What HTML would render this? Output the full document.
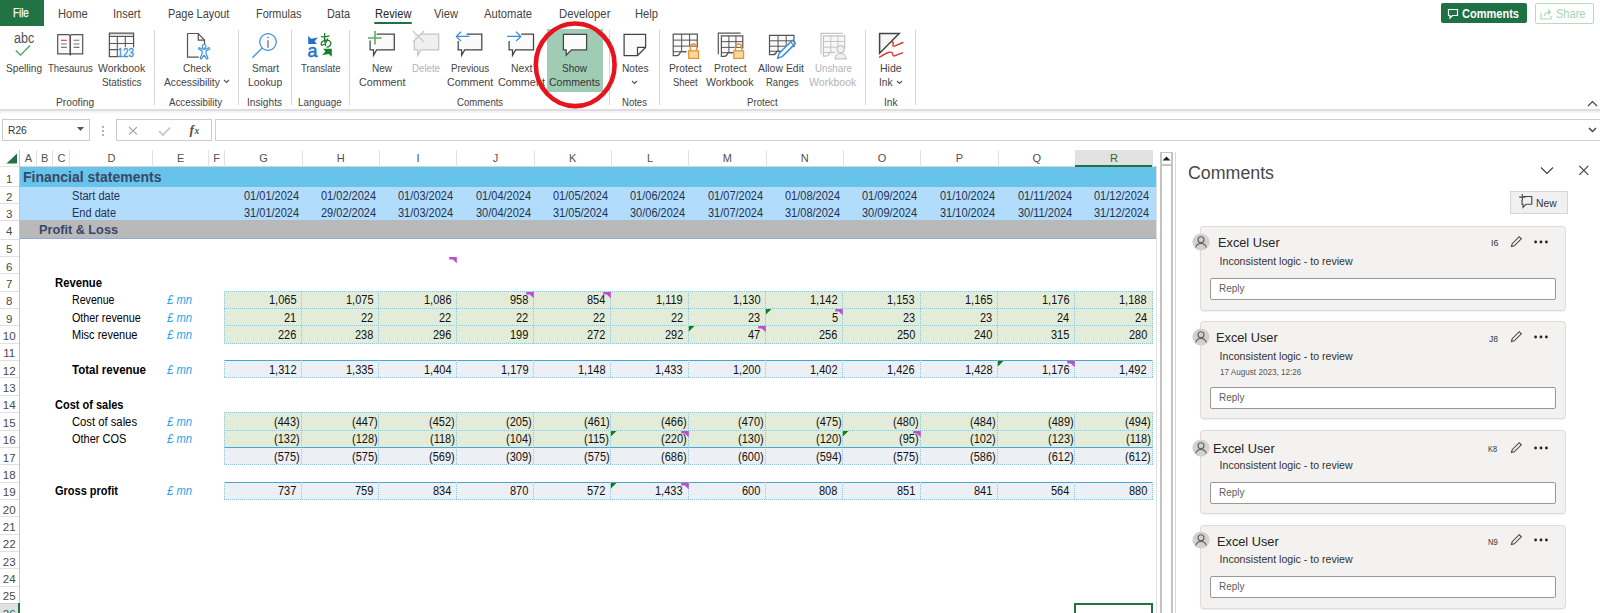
<!DOCTYPE html>
<html><head><meta charset="utf-8"><title>Excel Review</title>
<style>
html,body{margin:0;padding:0;background:#fff;}
body{width:1600px;height:613px;overflow:hidden;position:relative;font-family:"Liberation Sans",sans-serif;}
.a{position:absolute;}
.t{position:absolute;white-space:nowrap;}
svg.a{overflow:visible;}
</style></head><body>
<div class="a" style="left:0px;top:0px;width:44px;height:26px;background:#217346;"></div>
<div class="t" style="left:12.60px;top:5.77px;font-size:12.5px;line-height:15px;color:#fff;transform:scaleX(0.7844);transform-origin:0 0;-webkit-text-stroke:0.25px #fff;">File</div>
<div class="t" style="left:57.60px;top:6.84px;font-size:12px;line-height:14px;color:#444;transform:scaleX(0.9310);transform-origin:0 0;">Home</div>
<div class="t" style="left:113.00px;top:6.84px;font-size:12px;line-height:14px;color:#444;transform:scaleX(0.9196);transform-origin:0 0;">Insert</div>
<div class="t" style="left:167.60px;top:6.84px;font-size:12px;line-height:14px;color:#444;transform:scaleX(0.9111);transform-origin:0 0;">Page Layout</div>
<div class="t" style="left:255.60px;top:6.84px;font-size:12px;line-height:14px;color:#444;transform:scaleX(0.9078);transform-origin:0 0;">Formulas</div>
<div class="t" style="left:327.00px;top:6.84px;font-size:12px;line-height:14px;color:#444;transform:scaleX(0.9074);transform-origin:0 0;">Data</div>
<div class="t" style="left:374.60px;top:6.84px;font-size:12px;line-height:14px;color:#262626;transform:scaleX(0.9251);transform-origin:0 0;">Review</div>
<div class="t" style="left:434.00px;top:6.84px;font-size:12px;line-height:14px;color:#444;transform:scaleX(0.9305);transform-origin:0 0;">View</div>
<div class="t" style="left:484.00px;top:6.84px;font-size:12px;line-height:14px;color:#444;transform:scaleX(0.9345);transform-origin:0 0;">Automate</div>
<div class="t" style="left:558.60px;top:6.84px;font-size:12px;line-height:14px;color:#444;transform:scaleX(0.9397);transform-origin:0 0;">Developer</div>
<div class="t" style="left:635.00px;top:6.84px;font-size:12px;line-height:14px;color:#444;transform:scaleX(0.9319);transform-origin:0 0;">Help</div>
<div class="a" style="left:374px;top:22px;width:38px;height:2px;background:#1e7145;border-radius:1px;"></div>
<div class="a" style="left:1441px;top:3px;width:86px;height:20px;background:#1e7145;border-radius:2px;"></div>
<svg class="a" style="left:1447px;top:8px;" width="12" height="11" viewBox="0 0 12 11"><path d="M1.5 1.5h9v6h-5l-2.5 2.5v-2.5h-1.5z" fill="none" stroke="#fff" stroke-width="1.2"/></svg>
<div class="t" style="left:1462.00px;top:6.84px;font-size:12px;line-height:14px;color:#fff;font-weight:bold;transform:scaleX(0.9192);transform-origin:0 0;">Comments</div>
<div class="a" style="left:1535px;top:3px;width:59px;height:21px;border:1px solid #b5dcc3;border-radius:2px;box-sizing:border-box;"></div>
<svg class="a" style="left:1540px;top:8px;" width="13" height="12" viewBox="0 0 13 12"><path d="M1 5v6h10V8" fill="none" stroke="#a8d3b6" stroke-width="1.1"/><path d="M4 8c1-3 3-4 6-4M8 1.5l2.5 2.5L8 6.5" fill="none" stroke="#a8d3b6" stroke-width="1.1"/></svg>
<div class="t" style="left:1555.50px;top:6.84px;font-size:12px;line-height:14px;color:#a8d3b6;transform:scaleX(0.9212);transform-origin:0 0;">Share</div>
<div class="t" style="left:6.20px;top:61.69px;font-size:11px;line-height:13px;color:#444;transform:scaleX(0.9223);transform-origin:0 0;">Spelling</div>
<div class="t" style="left:47.80px;top:61.69px;font-size:11px;line-height:13px;color:#444;transform:scaleX(0.8620);transform-origin:0 0;">Thesaurus</div>
<div class="t" style="left:97.80px;top:61.69px;font-size:11px;line-height:13px;color:#444;transform:scaleX(0.9571);transform-origin:0 0;">Workbook</div>
<div class="t" style="left:102.00px;top:75.69px;font-size:11px;line-height:13px;color:#444;transform:scaleX(0.8975);transform-origin:0 0;">Statistics</div>
<div class="t" style="left:56.20px;top:95.69px;font-size:11px;line-height:13px;color:#444;transform:scaleX(0.9299);transform-origin:0 0;">Proofing</div>
<div class="t" style="left:182.90px;top:61.69px;font-size:11px;line-height:13px;color:#444;transform:scaleX(0.9012);transform-origin:0 0;">Check</div>
<div class="t" style="left:163.50px;top:75.69px;font-size:11px;line-height:13px;color:#444;transform:scaleX(0.9315);transform-origin:0 0;">Accessibility</div>
<div class="t" style="left:169.40px;top:95.69px;font-size:11px;line-height:13px;color:#444;transform:scaleX(0.8847);transform-origin:0 0;">Accessibility</div>
<div class="t" style="left:252.00px;top:61.69px;font-size:11px;line-height:13px;color:#444;transform:scaleX(0.9203);transform-origin:0 0;">Smart</div>
<div class="t" style="left:247.80px;top:75.69px;font-size:11px;line-height:13px;color:#444;transform:scaleX(0.9477);transform-origin:0 0;">Lookup</div>
<div class="t" style="left:246.70px;top:95.69px;font-size:11px;line-height:13px;color:#444;transform:scaleX(0.9259);transform-origin:0 0;">Insights</div>
<div class="t" style="left:301.20px;top:61.69px;font-size:11px;line-height:13px;color:#444;transform:scaleX(0.8692);transform-origin:0 0;">Translate</div>
<div class="t" style="left:298.40px;top:95.69px;font-size:11px;line-height:13px;color:#444;transform:scaleX(0.8909);transform-origin:0 0;">Language</div>
<div class="t" style="left:372.20px;top:61.69px;font-size:11px;line-height:13px;color:#444;transform:scaleX(0.9134);transform-origin:0 0;">New</div>
<div class="t" style="left:359.00px;top:75.69px;font-size:11px;line-height:13px;color:#444;transform:scaleX(0.9753);transform-origin:0 0;">Comment</div>
<div class="t" style="left:412.40px;top:61.69px;font-size:11px;line-height:13px;color:#b4b4b4;transform:scaleX(0.8806);transform-origin:0 0;">Delete</div>
<div class="t" style="left:451.20px;top:61.69px;font-size:11px;line-height:13px;color:#444;transform:scaleX(0.8926);transform-origin:0 0;">Previous</div>
<div class="t" style="left:446.70px;top:75.69px;font-size:11px;line-height:13px;color:#444;transform:scaleX(0.9690);transform-origin:0 0;">Comment</div>
<div class="t" style="left:510.90px;top:61.69px;font-size:11px;line-height:13px;color:#444;transform:scaleX(0.9506);transform-origin:0 0;">Next</div>
<div class="t" style="left:498.10px;top:75.69px;font-size:11px;line-height:13px;color:#444;transform:scaleX(0.9837);transform-origin:0 0;">Comment</div>
<div class="t" style="left:456.50px;top:95.69px;font-size:11px;line-height:13px;color:#444;transform:scaleX(0.8669);transform-origin:0 0;">Comments</div>
<div class="a" style="left:547px;top:29px;width:56px;height:63px;background:#a0cbb4;"></div>
<div class="t" style="left:562.00px;top:61.69px;font-size:11px;line-height:13px;color:#333;transform:scaleX(0.9049);transform-origin:0 0;">Show</div>
<div class="t" style="left:549.40px;top:75.69px;font-size:11px;line-height:13px;color:#333;transform:scaleX(0.9571);transform-origin:0 0;">Comments</div>
<div class="t" style="left:621.50px;top:61.69px;font-size:11px;line-height:13px;color:#444;transform:scaleX(0.9222);transform-origin:0 0;">Notes</div>
<div class="t" style="left:621.50px;top:95.69px;font-size:11px;line-height:13px;color:#444;transform:scaleX(0.8665);transform-origin:0 0;">Notes</div>
<div class="t" style="left:669.30px;top:61.69px;font-size:11px;line-height:13px;color:#444;transform:scaleX(0.9326);transform-origin:0 0;">Protect</div>
<div class="t" style="left:673.40px;top:75.69px;font-size:11px;line-height:13px;color:#444;transform:scaleX(0.8592);transform-origin:0 0;">Sheet</div>
<div class="t" style="left:714.00px;top:61.69px;font-size:11px;line-height:13px;color:#444;transform:scaleX(0.9384);transform-origin:0 0;">Protect</div>
<div class="t" style="left:706.40px;top:75.69px;font-size:11px;line-height:13px;color:#444;transform:scaleX(0.9631);transform-origin:0 0;">Workbook</div>
<div class="t" style="left:758.30px;top:61.69px;font-size:11px;line-height:13px;color:#444;transform:scaleX(0.9504);transform-origin:0 0;">Allow Edit</div>
<div class="t" style="left:765.50px;top:75.69px;font-size:11px;line-height:13px;color:#444;transform:scaleX(0.8651);transform-origin:0 0;">Ranges</div>
<div class="t" style="left:814.50px;top:61.69px;font-size:11px;line-height:13px;color:#b4b4b4;transform:scaleX(0.8851);transform-origin:0 0;">Unshare</div>
<div class="t" style="left:809.00px;top:75.69px;font-size:11px;line-height:13px;color:#b4b4b4;transform:scaleX(0.9591);transform-origin:0 0;">Workbook</div>
<div class="t" style="left:747.40px;top:95.69px;font-size:11px;line-height:13px;color:#444;transform:scaleX(0.8781);transform-origin:0 0;">Protect</div>
<div class="t" style="left:880.00px;top:61.69px;font-size:11px;line-height:13px;color:#444;transform:scaleX(0.9548);transform-origin:0 0;">Hide</div>
<div class="t" style="left:879.30px;top:75.69px;font-size:11px;line-height:13px;color:#444;transform:scaleX(0.9200);transform-origin:0 0;">Ink</div>
<div class="t" style="left:883.60px;top:95.69px;font-size:11px;line-height:13px;color:#444;transform:scaleX(0.9268);transform-origin:0 0;">Ink</div>
<svg class="a" style="left:222.5px;top:79px;" width="7" height="5" viewBox="0 0 7 5"><path d="M1 1l2.5 2.5L6 1" fill="none" stroke="#555" stroke-width="1.1"/></svg>
<svg class="a" style="left:631px;top:79.5px;" width="7" height="5" viewBox="0 0 7 5"><path d="M1 1l2.5 2.5L6 1" fill="none" stroke="#555" stroke-width="1.1"/></svg>
<svg class="a" style="left:895.5px;top:79.5px;" width="7" height="5" viewBox="0 0 7 5"><path d="M1 1l2.5 2.5L6 1" fill="none" stroke="#555" stroke-width="1.1"/></svg>
<div class="a" style="left:154px;top:30px;width:1px;height:75px;background:#d6d6d6;"></div>
<div class="a" style="left:238px;top:30px;width:1px;height:75px;background:#d6d6d6;"></div>
<div class="a" style="left:291px;top:30px;width:1px;height:75px;background:#d6d6d6;"></div>
<div class="a" style="left:349px;top:30px;width:1px;height:75px;background:#d6d6d6;"></div>
<div class="a" style="left:609px;top:30px;width:1px;height:75px;background:#d6d6d6;"></div>
<div class="a" style="left:659px;top:30px;width:1px;height:75px;background:#d6d6d6;"></div>
<div class="a" style="left:865px;top:30px;width:1px;height:75px;background:#d6d6d6;"></div>
<div class="a" style="left:915px;top:30px;width:1px;height:75px;background:#d6d6d6;"></div>
<div class="a" style="left:0px;top:109px;width:1600px;height:2px;background:#dedede;"></div>
<div class="a" style="left:0px;top:111px;width:1600px;height:3px;background:linear-gradient(#efefef,#fff);"></div>
<svg class="a" style="left:1587px;top:100px;" width="11" height="7" viewBox="0 0 11 7"><path d="M1 6l4.5-4.5L10 6" fill="none" stroke="#444" stroke-width="1.2"/></svg>
<div class="t" style="left:13.70px;top:30.25px;font-size:14px;line-height:17px;color:#505050;transform:scaleX(0.8993);transform-origin:0 0;">abc</div>
<div class="a" style="left:2px;top:119px;width:88px;height:22px;border:1px solid #cbcbcb;box-sizing:border-box;background:#fff;"></div>
<div class="t" style="left:8.20px;top:124.19px;font-size:11px;line-height:13px;color:#333;transform:scaleX(0.9316);transform-origin:0 0;">R26</div>
<svg class="a" style="left:77px;top:127px;" width="8" height="5" viewBox="0 0 8 5"><path d="M0 0h7L3.5 4z" fill="#555"/></svg>
<div class="a" style="left:102px;top:126px;width:2px;height:2px;background:#999;border-radius:50%;"></div>
<div class="a" style="left:102px;top:130px;width:2px;height:2px;background:#999;border-radius:50%;"></div>
<div class="a" style="left:102px;top:134px;width:2px;height:2px;background:#999;border-radius:50%;"></div>
<div class="a" style="left:116px;top:119px;width:96px;height:22px;border:1px solid #cbcbcb;box-sizing:border-box;background:#fff;"></div>
<svg class="a" style="left:128px;top:126px;" width="10" height="9" viewBox="0 0 10 9"><path d="M1 1l8 7.5M9 1L1 8.5" stroke="#a8a8a8" stroke-width="1.1"/></svg>
<svg class="a" style="left:158px;top:126px;" width="13" height="10" viewBox="0 0 13 10"><path d="M1 5l4 4L12 1.5" fill="none" stroke="#c4c4c4" stroke-width="1.6"/></svg>
<div class="a" style="left:215px;top:119px;width:1385px;height:22px;border:1px solid #cfcfcf;border-right:none;box-sizing:border-box;background:#fff;"></div>
<svg class="a" style="left:1588px;top:127px;" width="9" height="6" viewBox="0 0 9 6"><path d="M1 1l3.5 3.5L8 1" fill="none" stroke="#444" stroke-width="1.5"/></svg>
<div class="a" style="left:0px;top:150px;width:1157px;height:17px;background:#fff;"></div>
<div class="a" style="left:20px;top:166px;width:1137px;height:1px;background:#d4d4d4;"></div>
<div class="a" style="left:36px;top:150px;width:1px;height:17px;background:#e1e1e1;"></div>
<div class="t" style="left:24.83px;top:152.39px;font-size:11px;line-height:13px;color:#505050;">A</div>
<div class="a" style="left:52px;top:150px;width:1px;height:17px;background:#e1e1e1;"></div>
<div class="t" style="left:41.08px;top:152.39px;font-size:11px;line-height:13px;color:#505050;">B</div>
<div class="a" style="left:69px;top:150px;width:1px;height:17px;background:#e1e1e1;"></div>
<div class="t" style="left:57.48px;top:152.39px;font-size:11px;line-height:13px;color:#505050;">C</div>
<div class="a" style="left:152px;top:150px;width:1px;height:17px;background:#e1e1e1;"></div>
<div class="t" style="left:107.48px;top:152.39px;font-size:11px;line-height:13px;color:#505050;">D</div>
<div class="a" style="left:208px;top:150px;width:1px;height:17px;background:#e1e1e1;"></div>
<div class="t" style="left:177.08px;top:152.39px;font-size:11px;line-height:13px;color:#505050;">E</div>
<div class="a" style="left:224px;top:150px;width:1px;height:17px;background:#e1e1e1;"></div>
<div class="t" style="left:213.29px;top:152.39px;font-size:11px;line-height:13px;color:#505050;">F</div>
<div class="a" style="left:302px;top:150px;width:1px;height:17px;background:#e1e1e1;"></div>
<div class="t" style="left:259.19px;top:152.39px;font-size:11px;line-height:13px;color:#505050;">G</div>
<div class="a" style="left:379px;top:150px;width:1px;height:17px;background:#e1e1e1;"></div>
<div class="t" style="left:336.82px;top:152.39px;font-size:11px;line-height:13px;color:#505050;">H</div>
<div class="a" style="left:456px;top:150px;width:1px;height:17px;background:#e1e1e1;"></div>
<div class="t" style="left:416.60px;top:152.39px;font-size:11px;line-height:13px;color:#505050;">I</div>
<div class="a" style="left:534px;top:150px;width:1px;height:17px;background:#e1e1e1;"></div>
<div class="t" style="left:492.71px;top:152.39px;font-size:11px;line-height:13px;color:#505050;">J</div>
<div class="a" style="left:611px;top:150px;width:1px;height:17px;background:#e1e1e1;"></div>
<div class="t" style="left:569.12px;top:152.39px;font-size:11px;line-height:13px;color:#505050;">K</div>
<div class="a" style="left:688px;top:150px;width:1px;height:17px;background:#e1e1e1;"></div>
<div class="t" style="left:647.06px;top:152.39px;font-size:11px;line-height:13px;color:#505050;">L</div>
<div class="a" style="left:766px;top:150px;width:1px;height:17px;background:#e1e1e1;"></div>
<div class="t" style="left:722.86px;top:152.39px;font-size:11px;line-height:13px;color:#505050;">M</div>
<div class="a" style="left:843px;top:150px;width:1px;height:17px;background:#e1e1e1;"></div>
<div class="t" style="left:800.80px;top:152.39px;font-size:11px;line-height:13px;color:#505050;">N</div>
<div class="a" style="left:920px;top:150px;width:1px;height:17px;background:#e1e1e1;"></div>
<div class="t" style="left:877.83px;top:152.39px;font-size:11px;line-height:13px;color:#505050;">O</div>
<div class="a" style="left:998px;top:150px;width:1px;height:17px;background:#e1e1e1;"></div>
<div class="t" style="left:955.77px;top:152.39px;font-size:11px;line-height:13px;color:#505050;">P</div>
<div class="a" style="left:1075px;top:150px;width:1px;height:17px;background:#e1e1e1;"></div>
<div class="t" style="left:1032.49px;top:152.39px;font-size:11px;line-height:13px;color:#505050;">Q</div>
<div class="a" style="left:1152px;top:150px;width:1px;height:17px;background:#e1e1e1;"></div>
<div class="a" style="left:1075px;top:150px;width:77px;height:16px;background:#e1e1e1;"></div>
<div class="a" style="left:1075px;top:165px;width:77px;height:2px;background:#217346;"></div>
<div class="t" style="left:1110.12px;top:152.39px;font-size:11px;line-height:13px;color:#1e6a3e;">R</div>
<div class="a" style="left:0px;top:166px;width:20px;height:1px;background:#e6e6e6;"></div>
<svg class="a" style="left:6px;top:153px;" width="12" height="11" viewBox="0 0 12 11"><path d="M11 0.5V10.5H0.5z" fill="#217346"/></svg>
<div class="a" style="left:19px;top:150px;width:1px;height:463px;background:#c4c4c4;"></div>
<div class="a" style="left:0px;top:186px;width:19px;height:1px;background:#e1e1e1;"></div>
<div class="t" style="left:6.00px;top:171.82px;font-size:11.5px;line-height:14px;color:#4a4a4a;">1</div>
<div class="a" style="left:0px;top:203px;width:19px;height:1px;background:#e1e1e1;"></div>
<div class="t" style="left:6.00px;top:190.12px;font-size:11.5px;line-height:14px;color:#4a4a4a;">2</div>
<div class="a" style="left:0px;top:220px;width:19px;height:1px;background:#e1e1e1;"></div>
<div class="t" style="left:6.00px;top:207.02px;font-size:11.5px;line-height:14px;color:#4a4a4a;">3</div>
<div class="a" style="left:0px;top:239px;width:19px;height:1px;background:#e1e1e1;"></div>
<div class="t" style="left:6.00px;top:223.92px;font-size:11.5px;line-height:14px;color:#4a4a4a;">4</div>
<div class="a" style="left:0px;top:256px;width:19px;height:1px;background:#e1e1e1;"></div>
<div class="t" style="left:6.00px;top:242.22px;font-size:11.5px;line-height:14px;color:#4a4a4a;">5</div>
<div class="a" style="left:0px;top:273px;width:19px;height:1px;background:#e1e1e1;"></div>
<div class="t" style="left:6.00px;top:259.58px;font-size:11.5px;line-height:14px;color:#4a4a4a;">6</div>
<div class="a" style="left:0px;top:291px;width:19px;height:1px;background:#e1e1e1;"></div>
<div class="t" style="left:6.00px;top:276.94px;font-size:11.5px;line-height:14px;color:#4a4a4a;">7</div>
<div class="a" style="left:0px;top:308px;width:19px;height:1px;background:#e1e1e1;"></div>
<div class="t" style="left:6.00px;top:294.30px;font-size:11.5px;line-height:14px;color:#4a4a4a;">8</div>
<div class="a" style="left:0px;top:325px;width:19px;height:1px;background:#e1e1e1;"></div>
<div class="t" style="left:6.00px;top:311.66px;font-size:11.5px;line-height:14px;color:#4a4a4a;">9</div>
<div class="a" style="left:0px;top:343px;width:19px;height:1px;background:#e1e1e1;"></div>
<div class="t" style="left:2.80px;top:329.02px;font-size:11.5px;line-height:14px;color:#4a4a4a;">10</div>
<div class="a" style="left:0px;top:360px;width:19px;height:1px;background:#e1e1e1;"></div>
<div class="t" style="left:3.23px;top:346.38px;font-size:11.5px;line-height:14px;color:#4a4a4a;">11</div>
<div class="a" style="left:0px;top:377px;width:19px;height:1px;background:#e1e1e1;"></div>
<div class="t" style="left:2.80px;top:363.74px;font-size:11.5px;line-height:14px;color:#4a4a4a;">12</div>
<div class="a" style="left:0px;top:395px;width:19px;height:1px;background:#e1e1e1;"></div>
<div class="t" style="left:2.80px;top:381.10px;font-size:11.5px;line-height:14px;color:#4a4a4a;">13</div>
<div class="a" style="left:0px;top:412px;width:19px;height:1px;background:#e1e1e1;"></div>
<div class="t" style="left:2.80px;top:398.46px;font-size:11.5px;line-height:14px;color:#4a4a4a;">14</div>
<div class="a" style="left:0px;top:430px;width:19px;height:1px;background:#e1e1e1;"></div>
<div class="t" style="left:2.80px;top:415.82px;font-size:11.5px;line-height:14px;color:#4a4a4a;">15</div>
<div class="a" style="left:0px;top:447px;width:19px;height:1px;background:#e1e1e1;"></div>
<div class="t" style="left:2.80px;top:433.18px;font-size:11.5px;line-height:14px;color:#4a4a4a;">16</div>
<div class="a" style="left:0px;top:464px;width:19px;height:1px;background:#e1e1e1;"></div>
<div class="t" style="left:2.80px;top:450.54px;font-size:11.5px;line-height:14px;color:#4a4a4a;">17</div>
<div class="a" style="left:0px;top:482px;width:19px;height:1px;background:#e1e1e1;"></div>
<div class="t" style="left:2.80px;top:467.90px;font-size:11.5px;line-height:14px;color:#4a4a4a;">18</div>
<div class="a" style="left:0px;top:499px;width:19px;height:1px;background:#e1e1e1;"></div>
<div class="t" style="left:2.80px;top:485.26px;font-size:11.5px;line-height:14px;color:#4a4a4a;">19</div>
<div class="a" style="left:0px;top:516px;width:19px;height:1px;background:#e1e1e1;"></div>
<div class="t" style="left:2.80px;top:502.62px;font-size:11.5px;line-height:14px;color:#4a4a4a;">20</div>
<div class="a" style="left:0px;top:534px;width:19px;height:1px;background:#e1e1e1;"></div>
<div class="t" style="left:2.80px;top:519.98px;font-size:11.5px;line-height:14px;color:#4a4a4a;">21</div>
<div class="a" style="left:0px;top:551px;width:19px;height:1px;background:#e1e1e1;"></div>
<div class="t" style="left:2.80px;top:537.34px;font-size:11.5px;line-height:14px;color:#4a4a4a;">22</div>
<div class="a" style="left:0px;top:568px;width:19px;height:1px;background:#e1e1e1;"></div>
<div class="t" style="left:2.80px;top:554.70px;font-size:11.5px;line-height:14px;color:#4a4a4a;">23</div>
<div class="a" style="left:0px;top:586px;width:19px;height:1px;background:#e1e1e1;"></div>
<div class="t" style="left:2.80px;top:572.06px;font-size:11.5px;line-height:14px;color:#4a4a4a;">24</div>
<div class="a" style="left:0px;top:603px;width:19px;height:1px;background:#e1e1e1;"></div>
<div class="t" style="left:2.80px;top:589.42px;font-size:11.5px;line-height:14px;color:#4a4a4a;">25</div>
<div class="a" style="left:0px;top:621px;width:19px;height:1px;background:#e1e1e1;"></div>
<div class="a" style="left:0px;top:603px;width:19px;height:10px;background:#e1e1e1;"></div>
<div class="a" style="left:18px;top:603px;width:2px;height:10px;background:#217346;"></div>
<div class="a" style="left:0px;top:603px;width:18px;height:1px;background:#cfcfcf;"></div>
<div class="t" style="left:2.80px;top:606.78px;font-size:11.5px;line-height:14px;color:#1e6a3e;">26</div>
<div class="a" style="left:20px;top:167px;width:1137px;height:20px;background:#66c3ea;"></div>
<div class="a" style="left:20px;top:187px;width:1137px;height:33px;background:#b1dcfb;"></div>
<div class="a" style="left:20px;top:220px;width:1137px;height:18px;background:#b9b9b9;"></div>
<div class="a" style="left:20px;top:238px;width:1137px;height:1px;background:#8eaade;"></div>
<div class="t" style="left:23.00px;top:168.65px;font-size:14px;line-height:17px;color:#3a4668;font-weight:bold;">Financial statements</div>
<div class="t" style="left:71.50px;top:188.64px;font-size:12px;line-height:14px;color:#27314f;transform:scaleX(0.9225);transform-origin:0 0;">Start date</div>
<div class="t" style="left:71.50px;top:205.64px;font-size:12px;line-height:14px;color:#27314f;transform:scaleX(0.9167);transform-origin:0 0;">End date</div>
<div class="t" style="left:38.90px;top:222.00px;font-size:13px;line-height:16px;color:#3a4668;font-weight:bold;transform:scaleX(0.9766);transform-origin:0 0;">Profit &amp; Loss</div>
<div class="t" style="left:243.68px;top:188.64px;font-size:12px;line-height:14px;color:#27314f;transform:scaleX(0.9167);transform-origin:0 0;">01/01/2024</div>
<div class="t" style="left:243.68px;top:205.64px;font-size:12px;line-height:14px;color:#27314f;transform:scaleX(0.9167);transform-origin:0 0;">31/01/2024</div>
<div class="t" style="left:321.01px;top:188.64px;font-size:12px;line-height:14px;color:#27314f;transform:scaleX(0.9167);transform-origin:0 0;">01/02/2024</div>
<div class="t" style="left:321.01px;top:205.64px;font-size:12px;line-height:14px;color:#27314f;transform:scaleX(0.9167);transform-origin:0 0;">29/02/2024</div>
<div class="t" style="left:398.34px;top:188.64px;font-size:12px;line-height:14px;color:#27314f;transform:scaleX(0.9167);transform-origin:0 0;">01/03/2024</div>
<div class="t" style="left:398.34px;top:205.64px;font-size:12px;line-height:14px;color:#27314f;transform:scaleX(0.9167);transform-origin:0 0;">31/03/2024</div>
<div class="t" style="left:475.67px;top:188.64px;font-size:12px;line-height:14px;color:#27314f;transform:scaleX(0.9167);transform-origin:0 0;">01/04/2024</div>
<div class="t" style="left:475.67px;top:205.64px;font-size:12px;line-height:14px;color:#27314f;transform:scaleX(0.9167);transform-origin:0 0;">30/04/2024</div>
<div class="t" style="left:553.00px;top:188.64px;font-size:12px;line-height:14px;color:#27314f;transform:scaleX(0.9167);transform-origin:0 0;">01/05/2024</div>
<div class="t" style="left:553.00px;top:205.64px;font-size:12px;line-height:14px;color:#27314f;transform:scaleX(0.9167);transform-origin:0 0;">31/05/2024</div>
<div class="t" style="left:630.33px;top:188.64px;font-size:12px;line-height:14px;color:#27314f;transform:scaleX(0.9167);transform-origin:0 0;">01/06/2024</div>
<div class="t" style="left:630.33px;top:205.64px;font-size:12px;line-height:14px;color:#27314f;transform:scaleX(0.9167);transform-origin:0 0;">30/06/2024</div>
<div class="t" style="left:707.66px;top:188.64px;font-size:12px;line-height:14px;color:#27314f;transform:scaleX(0.9167);transform-origin:0 0;">01/07/2024</div>
<div class="t" style="left:707.66px;top:205.64px;font-size:12px;line-height:14px;color:#27314f;transform:scaleX(0.9167);transform-origin:0 0;">31/07/2024</div>
<div class="t" style="left:784.99px;top:188.64px;font-size:12px;line-height:14px;color:#27314f;transform:scaleX(0.9167);transform-origin:0 0;">01/08/2024</div>
<div class="t" style="left:784.99px;top:205.64px;font-size:12px;line-height:14px;color:#27314f;transform:scaleX(0.9167);transform-origin:0 0;">31/08/2024</div>
<div class="t" style="left:862.32px;top:188.64px;font-size:12px;line-height:14px;color:#27314f;transform:scaleX(0.9167);transform-origin:0 0;">01/09/2024</div>
<div class="t" style="left:862.32px;top:205.64px;font-size:12px;line-height:14px;color:#27314f;transform:scaleX(0.9167);transform-origin:0 0;">30/09/2024</div>
<div class="t" style="left:939.65px;top:188.64px;font-size:12px;line-height:14px;color:#27314f;transform:scaleX(0.9167);transform-origin:0 0;">01/10/2024</div>
<div class="t" style="left:939.65px;top:205.64px;font-size:12px;line-height:14px;color:#27314f;transform:scaleX(0.9167);transform-origin:0 0;">31/10/2024</div>
<div class="t" style="left:1017.79px;top:188.64px;font-size:12px;line-height:14px;color:#27314f;transform:scaleX(0.9167);transform-origin:0 0;">01/11/2024</div>
<div class="t" style="left:1017.79px;top:205.64px;font-size:12px;line-height:14px;color:#27314f;transform:scaleX(0.9167);transform-origin:0 0;">30/11/2024</div>
<div class="t" style="left:1094.31px;top:188.64px;font-size:12px;line-height:14px;color:#27314f;transform:scaleX(0.9167);transform-origin:0 0;">01/12/2024</div>
<div class="t" style="left:1094.31px;top:205.64px;font-size:12px;line-height:14px;color:#27314f;transform:scaleX(0.9167);transform-origin:0 0;">31/12/2024</div>
<div class="a" style="left:224px;top:291px;width:929px;height:53px;background:#e3ecd8;"></div>
<div class="a" style="left:224px;top:291px;width:929px;height:1px;background:repeating-linear-gradient(90deg,#86c9ee 0 1px,transparent 1px 2px);"></div>
<div class="a" style="left:224px;top:308px;width:929px;height:1px;background:repeating-linear-gradient(90deg,#86c9ee 0 1px,transparent 1px 2px);"></div>
<div class="a" style="left:224px;top:325px;width:929px;height:1px;background:repeating-linear-gradient(90deg,#86c9ee 0 1px,transparent 1px 2px);"></div>
<div class="a" style="left:224px;top:343px;width:929px;height:1px;background:repeating-linear-gradient(90deg,#86c9ee 0 1px,transparent 1px 2px);"></div>
<div class="a" style="left:224px;top:291px;width:1px;height:53px;background:repeating-linear-gradient(180deg,#86c9ee 0 1px,transparent 1px 2px);"></div>
<div class="a" style="left:301px;top:291px;width:1px;height:53px;background:repeating-linear-gradient(180deg,#86c9ee 0 1px,transparent 1px 2px);"></div>
<div class="a" style="left:378px;top:291px;width:1px;height:53px;background:repeating-linear-gradient(180deg,#86c9ee 0 1px,transparent 1px 2px);"></div>
<div class="a" style="left:456px;top:291px;width:1px;height:53px;background:repeating-linear-gradient(180deg,#86c9ee 0 1px,transparent 1px 2px);"></div>
<div class="a" style="left:533px;top:291px;width:1px;height:53px;background:repeating-linear-gradient(180deg,#86c9ee 0 1px,transparent 1px 2px);"></div>
<div class="a" style="left:610px;top:291px;width:1px;height:53px;background:repeating-linear-gradient(180deg,#86c9ee 0 1px,transparent 1px 2px);"></div>
<div class="a" style="left:688px;top:291px;width:1px;height:53px;background:repeating-linear-gradient(180deg,#86c9ee 0 1px,transparent 1px 2px);"></div>
<div class="a" style="left:765px;top:291px;width:1px;height:53px;background:repeating-linear-gradient(180deg,#86c9ee 0 1px,transparent 1px 2px);"></div>
<div class="a" style="left:842px;top:291px;width:1px;height:53px;background:repeating-linear-gradient(180deg,#86c9ee 0 1px,transparent 1px 2px);"></div>
<div class="a" style="left:920px;top:291px;width:1px;height:53px;background:repeating-linear-gradient(180deg,#86c9ee 0 1px,transparent 1px 2px);"></div>
<div class="a" style="left:997px;top:291px;width:1px;height:53px;background:repeating-linear-gradient(180deg,#86c9ee 0 1px,transparent 1px 2px);"></div>
<div class="a" style="left:1074px;top:291px;width:1px;height:53px;background:repeating-linear-gradient(180deg,#86c9ee 0 1px,transparent 1px 2px);"></div>
<div class="a" style="left:1152px;top:291px;width:1px;height:53px;background:repeating-linear-gradient(180deg,#86c9ee 0 1px,transparent 1px 2px);"></div>
<div class="a" style="left:224px;top:360px;width:929px;height:18px;background:#eceff4;"></div>
<div class="a" style="left:224px;top:360px;width:929px;height:1px;background:#45a6d8;"></div>
<div class="a" style="left:224px;top:377px;width:929px;height:1px;background:repeating-linear-gradient(90deg,#86c9ee 0 1px,transparent 1px 2px);"></div>
<div class="a" style="left:224px;top:360px;width:1px;height:18px;background:repeating-linear-gradient(180deg,#86c9ee 0 1px,transparent 1px 2px);"></div>
<div class="a" style="left:301px;top:360px;width:1px;height:18px;background:repeating-linear-gradient(180deg,#86c9ee 0 1px,transparent 1px 2px);"></div>
<div class="a" style="left:378px;top:360px;width:1px;height:18px;background:repeating-linear-gradient(180deg,#86c9ee 0 1px,transparent 1px 2px);"></div>
<div class="a" style="left:456px;top:360px;width:1px;height:18px;background:repeating-linear-gradient(180deg,#86c9ee 0 1px,transparent 1px 2px);"></div>
<div class="a" style="left:533px;top:360px;width:1px;height:18px;background:repeating-linear-gradient(180deg,#86c9ee 0 1px,transparent 1px 2px);"></div>
<div class="a" style="left:610px;top:360px;width:1px;height:18px;background:repeating-linear-gradient(180deg,#86c9ee 0 1px,transparent 1px 2px);"></div>
<div class="a" style="left:688px;top:360px;width:1px;height:18px;background:repeating-linear-gradient(180deg,#86c9ee 0 1px,transparent 1px 2px);"></div>
<div class="a" style="left:765px;top:360px;width:1px;height:18px;background:repeating-linear-gradient(180deg,#86c9ee 0 1px,transparent 1px 2px);"></div>
<div class="a" style="left:842px;top:360px;width:1px;height:18px;background:repeating-linear-gradient(180deg,#86c9ee 0 1px,transparent 1px 2px);"></div>
<div class="a" style="left:920px;top:360px;width:1px;height:18px;background:repeating-linear-gradient(180deg,#86c9ee 0 1px,transparent 1px 2px);"></div>
<div class="a" style="left:997px;top:360px;width:1px;height:18px;background:repeating-linear-gradient(180deg,#86c9ee 0 1px,transparent 1px 2px);"></div>
<div class="a" style="left:1074px;top:360px;width:1px;height:18px;background:repeating-linear-gradient(180deg,#86c9ee 0 1px,transparent 1px 2px);"></div>
<div class="a" style="left:1152px;top:360px;width:1px;height:18px;background:repeating-linear-gradient(180deg,#86c9ee 0 1px,transparent 1px 2px);"></div>
<div class="a" style="left:224px;top:412px;width:929px;height:36px;background:#e3ecd8;"></div>
<div class="a" style="left:224px;top:412px;width:929px;height:1px;background:repeating-linear-gradient(90deg,#86c9ee 0 1px,transparent 1px 2px);"></div>
<div class="a" style="left:224px;top:430px;width:929px;height:1px;background:repeating-linear-gradient(90deg,#86c9ee 0 1px,transparent 1px 2px);"></div>
<div class="a" style="left:224px;top:447px;width:929px;height:1px;background:repeating-linear-gradient(90deg,#86c9ee 0 1px,transparent 1px 2px);"></div>
<div class="a" style="left:224px;top:412px;width:1px;height:36px;background:repeating-linear-gradient(180deg,#86c9ee 0 1px,transparent 1px 2px);"></div>
<div class="a" style="left:301px;top:412px;width:1px;height:36px;background:repeating-linear-gradient(180deg,#86c9ee 0 1px,transparent 1px 2px);"></div>
<div class="a" style="left:378px;top:412px;width:1px;height:36px;background:repeating-linear-gradient(180deg,#86c9ee 0 1px,transparent 1px 2px);"></div>
<div class="a" style="left:456px;top:412px;width:1px;height:36px;background:repeating-linear-gradient(180deg,#86c9ee 0 1px,transparent 1px 2px);"></div>
<div class="a" style="left:533px;top:412px;width:1px;height:36px;background:repeating-linear-gradient(180deg,#86c9ee 0 1px,transparent 1px 2px);"></div>
<div class="a" style="left:610px;top:412px;width:1px;height:36px;background:repeating-linear-gradient(180deg,#86c9ee 0 1px,transparent 1px 2px);"></div>
<div class="a" style="left:688px;top:412px;width:1px;height:36px;background:repeating-linear-gradient(180deg,#86c9ee 0 1px,transparent 1px 2px);"></div>
<div class="a" style="left:765px;top:412px;width:1px;height:36px;background:repeating-linear-gradient(180deg,#86c9ee 0 1px,transparent 1px 2px);"></div>
<div class="a" style="left:842px;top:412px;width:1px;height:36px;background:repeating-linear-gradient(180deg,#86c9ee 0 1px,transparent 1px 2px);"></div>
<div class="a" style="left:920px;top:412px;width:1px;height:36px;background:repeating-linear-gradient(180deg,#86c9ee 0 1px,transparent 1px 2px);"></div>
<div class="a" style="left:997px;top:412px;width:1px;height:36px;background:repeating-linear-gradient(180deg,#86c9ee 0 1px,transparent 1px 2px);"></div>
<div class="a" style="left:1074px;top:412px;width:1px;height:36px;background:repeating-linear-gradient(180deg,#86c9ee 0 1px,transparent 1px 2px);"></div>
<div class="a" style="left:1152px;top:412px;width:1px;height:36px;background:repeating-linear-gradient(180deg,#86c9ee 0 1px,transparent 1px 2px);"></div>
<div class="a" style="left:224px;top:447px;width:929px;height:18px;background:#eceff4;"></div>
<div class="a" style="left:224px;top:447px;width:929px;height:1px;background:#45a6d8;"></div>
<div class="a" style="left:224px;top:464px;width:929px;height:1px;background:repeating-linear-gradient(90deg,#86c9ee 0 1px,transparent 1px 2px);"></div>
<div class="a" style="left:224px;top:447px;width:1px;height:18px;background:repeating-linear-gradient(180deg,#86c9ee 0 1px,transparent 1px 2px);"></div>
<div class="a" style="left:301px;top:447px;width:1px;height:18px;background:repeating-linear-gradient(180deg,#86c9ee 0 1px,transparent 1px 2px);"></div>
<div class="a" style="left:378px;top:447px;width:1px;height:18px;background:repeating-linear-gradient(180deg,#86c9ee 0 1px,transparent 1px 2px);"></div>
<div class="a" style="left:456px;top:447px;width:1px;height:18px;background:repeating-linear-gradient(180deg,#86c9ee 0 1px,transparent 1px 2px);"></div>
<div class="a" style="left:533px;top:447px;width:1px;height:18px;background:repeating-linear-gradient(180deg,#86c9ee 0 1px,transparent 1px 2px);"></div>
<div class="a" style="left:610px;top:447px;width:1px;height:18px;background:repeating-linear-gradient(180deg,#86c9ee 0 1px,transparent 1px 2px);"></div>
<div class="a" style="left:688px;top:447px;width:1px;height:18px;background:repeating-linear-gradient(180deg,#86c9ee 0 1px,transparent 1px 2px);"></div>
<div class="a" style="left:765px;top:447px;width:1px;height:18px;background:repeating-linear-gradient(180deg,#86c9ee 0 1px,transparent 1px 2px);"></div>
<div class="a" style="left:842px;top:447px;width:1px;height:18px;background:repeating-linear-gradient(180deg,#86c9ee 0 1px,transparent 1px 2px);"></div>
<div class="a" style="left:920px;top:447px;width:1px;height:18px;background:repeating-linear-gradient(180deg,#86c9ee 0 1px,transparent 1px 2px);"></div>
<div class="a" style="left:997px;top:447px;width:1px;height:18px;background:repeating-linear-gradient(180deg,#86c9ee 0 1px,transparent 1px 2px);"></div>
<div class="a" style="left:1074px;top:447px;width:1px;height:18px;background:repeating-linear-gradient(180deg,#86c9ee 0 1px,transparent 1px 2px);"></div>
<div class="a" style="left:1152px;top:447px;width:1px;height:18px;background:repeating-linear-gradient(180deg,#86c9ee 0 1px,transparent 1px 2px);"></div>
<div class="a" style="left:224px;top:482px;width:929px;height:18px;background:#eceff4;"></div>
<div class="a" style="left:224px;top:482px;width:929px;height:1px;background:#45a6d8;"></div>
<div class="a" style="left:224px;top:499px;width:929px;height:1px;background:repeating-linear-gradient(90deg,#86c9ee 0 1px,transparent 1px 2px);"></div>
<div class="a" style="left:224px;top:482px;width:1px;height:18px;background:repeating-linear-gradient(180deg,#86c9ee 0 1px,transparent 1px 2px);"></div>
<div class="a" style="left:301px;top:482px;width:1px;height:18px;background:repeating-linear-gradient(180deg,#86c9ee 0 1px,transparent 1px 2px);"></div>
<div class="a" style="left:378px;top:482px;width:1px;height:18px;background:repeating-linear-gradient(180deg,#86c9ee 0 1px,transparent 1px 2px);"></div>
<div class="a" style="left:456px;top:482px;width:1px;height:18px;background:repeating-linear-gradient(180deg,#86c9ee 0 1px,transparent 1px 2px);"></div>
<div class="a" style="left:533px;top:482px;width:1px;height:18px;background:repeating-linear-gradient(180deg,#86c9ee 0 1px,transparent 1px 2px);"></div>
<div class="a" style="left:610px;top:482px;width:1px;height:18px;background:repeating-linear-gradient(180deg,#86c9ee 0 1px,transparent 1px 2px);"></div>
<div class="a" style="left:688px;top:482px;width:1px;height:18px;background:repeating-linear-gradient(180deg,#86c9ee 0 1px,transparent 1px 2px);"></div>
<div class="a" style="left:765px;top:482px;width:1px;height:18px;background:repeating-linear-gradient(180deg,#86c9ee 0 1px,transparent 1px 2px);"></div>
<div class="a" style="left:842px;top:482px;width:1px;height:18px;background:repeating-linear-gradient(180deg,#86c9ee 0 1px,transparent 1px 2px);"></div>
<div class="a" style="left:920px;top:482px;width:1px;height:18px;background:repeating-linear-gradient(180deg,#86c9ee 0 1px,transparent 1px 2px);"></div>
<div class="a" style="left:997px;top:482px;width:1px;height:18px;background:repeating-linear-gradient(180deg,#86c9ee 0 1px,transparent 1px 2px);"></div>
<div class="a" style="left:1074px;top:482px;width:1px;height:18px;background:repeating-linear-gradient(180deg,#86c9ee 0 1px,transparent 1px 2px);"></div>
<div class="a" style="left:1152px;top:482px;width:1px;height:18px;background:repeating-linear-gradient(180deg,#86c9ee 0 1px,transparent 1px 2px);"></div>
<div class="t" style="left:268.84px;top:293.42px;font-size:12px;line-height:14px;color:#111;transform:scaleX(0.9167);transform-origin:0 0;">1,065</div>
<div class="t" style="left:346.17px;top:293.42px;font-size:12px;line-height:14px;color:#111;transform:scaleX(0.9167);transform-origin:0 0;">1,075</div>
<div class="t" style="left:423.50px;top:293.42px;font-size:12px;line-height:14px;color:#111;transform:scaleX(0.9167);transform-origin:0 0;">1,086</div>
<div class="t" style="left:510.00px;top:293.42px;font-size:12px;line-height:14px;color:#111;transform:scaleX(0.9167);transform-origin:0 0;">958</div>
<div class="t" style="left:587.33px;top:293.42px;font-size:12px;line-height:14px;color:#111;transform:scaleX(0.9167);transform-origin:0 0;">854</div>
<div class="t" style="left:656.31px;top:293.42px;font-size:12px;line-height:14px;color:#111;transform:scaleX(0.9167);transform-origin:0 0;">1,119</div>
<div class="t" style="left:732.82px;top:293.42px;font-size:12px;line-height:14px;color:#111;transform:scaleX(0.9167);transform-origin:0 0;">1,130</div>
<div class="t" style="left:810.15px;top:293.42px;font-size:12px;line-height:14px;color:#111;transform:scaleX(0.9167);transform-origin:0 0;">1,142</div>
<div class="t" style="left:887.48px;top:293.42px;font-size:12px;line-height:14px;color:#111;transform:scaleX(0.9167);transform-origin:0 0;">1,153</div>
<div class="t" style="left:964.81px;top:293.42px;font-size:12px;line-height:14px;color:#111;transform:scaleX(0.9167);transform-origin:0 0;">1,165</div>
<div class="t" style="left:1042.14px;top:293.42px;font-size:12px;line-height:14px;color:#111;transform:scaleX(0.9167);transform-origin:0 0;">1,176</div>
<div class="t" style="left:1119.47px;top:293.42px;font-size:12px;line-height:14px;color:#111;transform:scaleX(0.9167);transform-origin:0 0;">1,188</div>
<div class="t" style="left:284.13px;top:310.78px;font-size:12px;line-height:14px;color:#111;transform:scaleX(0.9167);transform-origin:0 0;">21</div>
<div class="t" style="left:361.46px;top:310.78px;font-size:12px;line-height:14px;color:#111;transform:scaleX(0.9167);transform-origin:0 0;">22</div>
<div class="t" style="left:438.79px;top:310.78px;font-size:12px;line-height:14px;color:#111;transform:scaleX(0.9167);transform-origin:0 0;">22</div>
<div class="t" style="left:516.12px;top:310.78px;font-size:12px;line-height:14px;color:#111;transform:scaleX(0.9167);transform-origin:0 0;">22</div>
<div class="t" style="left:593.45px;top:310.78px;font-size:12px;line-height:14px;color:#111;transform:scaleX(0.9167);transform-origin:0 0;">22</div>
<div class="t" style="left:670.78px;top:310.78px;font-size:12px;line-height:14px;color:#111;transform:scaleX(0.9167);transform-origin:0 0;">22</div>
<div class="t" style="left:748.11px;top:310.78px;font-size:12px;line-height:14px;color:#111;transform:scaleX(0.9167);transform-origin:0 0;">23</div>
<div class="t" style="left:831.56px;top:310.78px;font-size:12px;line-height:14px;color:#111;transform:scaleX(0.9167);transform-origin:0 0;">5</div>
<div class="t" style="left:902.77px;top:310.78px;font-size:12px;line-height:14px;color:#111;transform:scaleX(0.9167);transform-origin:0 0;">23</div>
<div class="t" style="left:980.10px;top:310.78px;font-size:12px;line-height:14px;color:#111;transform:scaleX(0.9167);transform-origin:0 0;">23</div>
<div class="t" style="left:1057.43px;top:310.78px;font-size:12px;line-height:14px;color:#111;transform:scaleX(0.9167);transform-origin:0 0;">24</div>
<div class="t" style="left:1134.76px;top:310.78px;font-size:12px;line-height:14px;color:#111;transform:scaleX(0.9167);transform-origin:0 0;">24</div>
<div class="t" style="left:278.01px;top:328.14px;font-size:12px;line-height:14px;color:#111;transform:scaleX(0.9167);transform-origin:0 0;">226</div>
<div class="t" style="left:355.34px;top:328.14px;font-size:12px;line-height:14px;color:#111;transform:scaleX(0.9167);transform-origin:0 0;">238</div>
<div class="t" style="left:432.67px;top:328.14px;font-size:12px;line-height:14px;color:#111;transform:scaleX(0.9167);transform-origin:0 0;">296</div>
<div class="t" style="left:510.00px;top:328.14px;font-size:12px;line-height:14px;color:#111;transform:scaleX(0.9167);transform-origin:0 0;">199</div>
<div class="t" style="left:587.33px;top:328.14px;font-size:12px;line-height:14px;color:#111;transform:scaleX(0.9167);transform-origin:0 0;">272</div>
<div class="t" style="left:664.66px;top:328.14px;font-size:12px;line-height:14px;color:#111;transform:scaleX(0.9167);transform-origin:0 0;">292</div>
<div class="t" style="left:748.11px;top:328.14px;font-size:12px;line-height:14px;color:#111;transform:scaleX(0.9167);transform-origin:0 0;">47</div>
<div class="t" style="left:819.32px;top:328.14px;font-size:12px;line-height:14px;color:#111;transform:scaleX(0.9167);transform-origin:0 0;">256</div>
<div class="t" style="left:896.65px;top:328.14px;font-size:12px;line-height:14px;color:#111;transform:scaleX(0.9167);transform-origin:0 0;">250</div>
<div class="t" style="left:973.98px;top:328.14px;font-size:12px;line-height:14px;color:#111;transform:scaleX(0.9167);transform-origin:0 0;">240</div>
<div class="t" style="left:1051.31px;top:328.14px;font-size:12px;line-height:14px;color:#111;transform:scaleX(0.9167);transform-origin:0 0;">315</div>
<div class="t" style="left:1128.64px;top:328.14px;font-size:12px;line-height:14px;color:#111;transform:scaleX(0.9167);transform-origin:0 0;">280</div>
<div class="t" style="left:268.84px;top:362.86px;font-size:12px;line-height:14px;color:#111;transform:scaleX(0.9167);transform-origin:0 0;">1,312</div>
<div class="t" style="left:346.17px;top:362.86px;font-size:12px;line-height:14px;color:#111;transform:scaleX(0.9167);transform-origin:0 0;">1,335</div>
<div class="t" style="left:423.50px;top:362.86px;font-size:12px;line-height:14px;color:#111;transform:scaleX(0.9167);transform-origin:0 0;">1,404</div>
<div class="t" style="left:500.83px;top:362.86px;font-size:12px;line-height:14px;color:#111;transform:scaleX(0.9167);transform-origin:0 0;">1,179</div>
<div class="t" style="left:578.16px;top:362.86px;font-size:12px;line-height:14px;color:#111;transform:scaleX(0.9167);transform-origin:0 0;">1,148</div>
<div class="t" style="left:655.49px;top:362.86px;font-size:12px;line-height:14px;color:#111;transform:scaleX(0.9167);transform-origin:0 0;">1,433</div>
<div class="t" style="left:732.82px;top:362.86px;font-size:12px;line-height:14px;color:#111;transform:scaleX(0.9167);transform-origin:0 0;">1,200</div>
<div class="t" style="left:810.15px;top:362.86px;font-size:12px;line-height:14px;color:#111;transform:scaleX(0.9167);transform-origin:0 0;">1,402</div>
<div class="t" style="left:887.48px;top:362.86px;font-size:12px;line-height:14px;color:#111;transform:scaleX(0.9167);transform-origin:0 0;">1,426</div>
<div class="t" style="left:964.81px;top:362.86px;font-size:12px;line-height:14px;color:#111;transform:scaleX(0.9167);transform-origin:0 0;">1,428</div>
<div class="t" style="left:1042.14px;top:362.86px;font-size:12px;line-height:14px;color:#111;transform:scaleX(0.9167);transform-origin:0 0;">1,176</div>
<div class="t" style="left:1119.47px;top:362.86px;font-size:12px;line-height:14px;color:#111;transform:scaleX(0.9167);transform-origin:0 0;">1,492</div>
<div class="t" style="left:274.35px;top:414.94px;font-size:12px;line-height:14px;color:#111;transform:scaleX(0.9167);transform-origin:0 0;">(443)</div>
<div class="t" style="left:351.68px;top:414.94px;font-size:12px;line-height:14px;color:#111;transform:scaleX(0.9167);transform-origin:0 0;">(447)</div>
<div class="t" style="left:429.01px;top:414.94px;font-size:12px;line-height:14px;color:#111;transform:scaleX(0.9167);transform-origin:0 0;">(452)</div>
<div class="t" style="left:506.34px;top:414.94px;font-size:12px;line-height:14px;color:#111;transform:scaleX(0.9167);transform-origin:0 0;">(205)</div>
<div class="t" style="left:583.67px;top:414.94px;font-size:12px;line-height:14px;color:#111;transform:scaleX(0.9167);transform-origin:0 0;">(461)</div>
<div class="t" style="left:661.00px;top:414.94px;font-size:12px;line-height:14px;color:#111;transform:scaleX(0.9167);transform-origin:0 0;">(466)</div>
<div class="t" style="left:738.33px;top:414.94px;font-size:12px;line-height:14px;color:#111;transform:scaleX(0.9167);transform-origin:0 0;">(470)</div>
<div class="t" style="left:815.66px;top:414.94px;font-size:12px;line-height:14px;color:#111;transform:scaleX(0.9167);transform-origin:0 0;">(475)</div>
<div class="t" style="left:892.99px;top:414.94px;font-size:12px;line-height:14px;color:#111;transform:scaleX(0.9167);transform-origin:0 0;">(480)</div>
<div class="t" style="left:970.32px;top:414.94px;font-size:12px;line-height:14px;color:#111;transform:scaleX(0.9167);transform-origin:0 0;">(484)</div>
<div class="t" style="left:1047.65px;top:414.94px;font-size:12px;line-height:14px;color:#111;transform:scaleX(0.9167);transform-origin:0 0;">(489)</div>
<div class="t" style="left:1124.98px;top:414.94px;font-size:12px;line-height:14px;color:#111;transform:scaleX(0.9167);transform-origin:0 0;">(494)</div>
<div class="t" style="left:274.35px;top:432.30px;font-size:12px;line-height:14px;color:#111;transform:scaleX(0.9167);transform-origin:0 0;">(132)</div>
<div class="t" style="left:351.68px;top:432.30px;font-size:12px;line-height:14px;color:#111;transform:scaleX(0.9167);transform-origin:0 0;">(128)</div>
<div class="t" style="left:429.83px;top:432.30px;font-size:12px;line-height:14px;color:#111;transform:scaleX(0.9167);transform-origin:0 0;">(118)</div>
<div class="t" style="left:506.34px;top:432.30px;font-size:12px;line-height:14px;color:#111;transform:scaleX(0.9167);transform-origin:0 0;">(104)</div>
<div class="t" style="left:584.49px;top:432.30px;font-size:12px;line-height:14px;color:#111;transform:scaleX(0.9167);transform-origin:0 0;">(115)</div>
<div class="t" style="left:661.00px;top:432.30px;font-size:12px;line-height:14px;color:#111;transform:scaleX(0.9167);transform-origin:0 0;">(220)</div>
<div class="t" style="left:738.33px;top:432.30px;font-size:12px;line-height:14px;color:#111;transform:scaleX(0.9167);transform-origin:0 0;">(130)</div>
<div class="t" style="left:815.66px;top:432.30px;font-size:12px;line-height:14px;color:#111;transform:scaleX(0.9167);transform-origin:0 0;">(120)</div>
<div class="t" style="left:899.11px;top:432.30px;font-size:12px;line-height:14px;color:#111;transform:scaleX(0.9167);transform-origin:0 0;">(95)</div>
<div class="t" style="left:970.32px;top:432.30px;font-size:12px;line-height:14px;color:#111;transform:scaleX(0.9167);transform-origin:0 0;">(102)</div>
<div class="t" style="left:1047.65px;top:432.30px;font-size:12px;line-height:14px;color:#111;transform:scaleX(0.9167);transform-origin:0 0;">(123)</div>
<div class="t" style="left:1125.80px;top:432.30px;font-size:12px;line-height:14px;color:#111;transform:scaleX(0.9167);transform-origin:0 0;">(118)</div>
<div class="t" style="left:274.35px;top:449.66px;font-size:12px;line-height:14px;color:#111;transform:scaleX(0.9167);transform-origin:0 0;">(575)</div>
<div class="t" style="left:351.68px;top:449.66px;font-size:12px;line-height:14px;color:#111;transform:scaleX(0.9167);transform-origin:0 0;">(575)</div>
<div class="t" style="left:429.01px;top:449.66px;font-size:12px;line-height:14px;color:#111;transform:scaleX(0.9167);transform-origin:0 0;">(569)</div>
<div class="t" style="left:506.34px;top:449.66px;font-size:12px;line-height:14px;color:#111;transform:scaleX(0.9167);transform-origin:0 0;">(309)</div>
<div class="t" style="left:583.67px;top:449.66px;font-size:12px;line-height:14px;color:#111;transform:scaleX(0.9167);transform-origin:0 0;">(575)</div>
<div class="t" style="left:661.00px;top:449.66px;font-size:12px;line-height:14px;color:#111;transform:scaleX(0.9167);transform-origin:0 0;">(686)</div>
<div class="t" style="left:738.33px;top:449.66px;font-size:12px;line-height:14px;color:#111;transform:scaleX(0.9167);transform-origin:0 0;">(600)</div>
<div class="t" style="left:815.66px;top:449.66px;font-size:12px;line-height:14px;color:#111;transform:scaleX(0.9167);transform-origin:0 0;">(594)</div>
<div class="t" style="left:892.99px;top:449.66px;font-size:12px;line-height:14px;color:#111;transform:scaleX(0.9167);transform-origin:0 0;">(575)</div>
<div class="t" style="left:970.32px;top:449.66px;font-size:12px;line-height:14px;color:#111;transform:scaleX(0.9167);transform-origin:0 0;">(586)</div>
<div class="t" style="left:1047.65px;top:449.66px;font-size:12px;line-height:14px;color:#111;transform:scaleX(0.9167);transform-origin:0 0;">(612)</div>
<div class="t" style="left:1124.98px;top:449.66px;font-size:12px;line-height:14px;color:#111;transform:scaleX(0.9167);transform-origin:0 0;">(612)</div>
<div class="t" style="left:278.01px;top:484.38px;font-size:12px;line-height:14px;color:#111;transform:scaleX(0.9167);transform-origin:0 0;">737</div>
<div class="t" style="left:355.34px;top:484.38px;font-size:12px;line-height:14px;color:#111;transform:scaleX(0.9167);transform-origin:0 0;">759</div>
<div class="t" style="left:432.67px;top:484.38px;font-size:12px;line-height:14px;color:#111;transform:scaleX(0.9167);transform-origin:0 0;">834</div>
<div class="t" style="left:510.00px;top:484.38px;font-size:12px;line-height:14px;color:#111;transform:scaleX(0.9167);transform-origin:0 0;">870</div>
<div class="t" style="left:587.33px;top:484.38px;font-size:12px;line-height:14px;color:#111;transform:scaleX(0.9167);transform-origin:0 0;">572</div>
<div class="t" style="left:655.49px;top:484.38px;font-size:12px;line-height:14px;color:#111;transform:scaleX(0.9167);transform-origin:0 0;">1,433</div>
<div class="t" style="left:741.99px;top:484.38px;font-size:12px;line-height:14px;color:#111;transform:scaleX(0.9167);transform-origin:0 0;">600</div>
<div class="t" style="left:819.32px;top:484.38px;font-size:12px;line-height:14px;color:#111;transform:scaleX(0.9167);transform-origin:0 0;">808</div>
<div class="t" style="left:896.65px;top:484.38px;font-size:12px;line-height:14px;color:#111;transform:scaleX(0.9167);transform-origin:0 0;">851</div>
<div class="t" style="left:973.98px;top:484.38px;font-size:12px;line-height:14px;color:#111;transform:scaleX(0.9167);transform-origin:0 0;">841</div>
<div class="t" style="left:1051.31px;top:484.38px;font-size:12px;line-height:14px;color:#111;transform:scaleX(0.9167);transform-origin:0 0;">564</div>
<div class="t" style="left:1128.64px;top:484.38px;font-size:12px;line-height:14px;color:#111;transform:scaleX(0.9167);transform-origin:0 0;">880</div>
<div class="t" style="left:55.00px;top:276.06px;font-size:12px;line-height:14px;color:#000;font-weight:bold;transform:scaleX(0.9396);transform-origin:0 0;">Revenue</div>
<div class="t" style="left:71.50px;top:293.42px;font-size:12px;line-height:14px;color:#000;transform:scaleX(0.8848);transform-origin:0 0;">Revenue</div>
<div class="t" style="left:71.50px;top:310.78px;font-size:12px;line-height:14px;color:#000;transform:scaleX(0.8956);transform-origin:0 0;">Other revenue</div>
<div class="t" style="left:71.50px;top:328.14px;font-size:12px;line-height:14px;color:#000;transform:scaleX(0.9167);transform-origin:0 0;">Misc revenue</div>
<div class="t" style="left:71.50px;top:362.86px;font-size:12px;line-height:14px;color:#000;font-weight:bold;transform:scaleX(0.9594);transform-origin:0 0;">Total revenue</div>
<div class="t" style="left:55.00px;top:397.58px;font-size:12px;line-height:14px;color:#000;font-weight:bold;transform:scaleX(0.9167);transform-origin:0 0;">Cost of sales</div>
<div class="t" style="left:71.50px;top:414.94px;font-size:12px;line-height:14px;color:#000;transform:scaleX(0.9371);transform-origin:0 0;">Cost of sales</div>
<div class="t" style="left:71.50px;top:432.30px;font-size:12px;line-height:14px;color:#000;transform:scaleX(0.9167);transform-origin:0 0;">Other COS</div>
<div class="t" style="left:55.00px;top:484.38px;font-size:12px;line-height:14px;color:#000;font-weight:bold;transform:scaleX(0.9167);transform-origin:0 0;">Gross profit</div>
<div class="t" style="left:167.00px;top:293.42px;font-size:12px;line-height:14px;color:#1ea6ea;font-style:italic;transform:scaleX(0.9371);transform-origin:0 0;">£ mn</div>
<div class="t" style="left:167.00px;top:310.78px;font-size:12px;line-height:14px;color:#1ea6ea;font-style:italic;transform:scaleX(0.9371);transform-origin:0 0;">£ mn</div>
<div class="t" style="left:167.00px;top:328.14px;font-size:12px;line-height:14px;color:#1ea6ea;font-style:italic;transform:scaleX(0.9371);transform-origin:0 0;">£ mn</div>
<div class="t" style="left:167.00px;top:362.86px;font-size:12px;line-height:14px;color:#1ea6ea;font-style:italic;transform:scaleX(0.9371);transform-origin:0 0;">£ mn</div>
<div class="t" style="left:167.00px;top:414.94px;font-size:12px;line-height:14px;color:#1ea6ea;font-style:italic;transform:scaleX(0.9371);transform-origin:0 0;">£ mn</div>
<div class="t" style="left:167.00px;top:432.30px;font-size:12px;line-height:14px;color:#1ea6ea;font-style:italic;transform:scaleX(0.9371);transform-origin:0 0;">£ mn</div>
<div class="t" style="left:167.00px;top:484.38px;font-size:12px;line-height:14px;color:#1ea6ea;font-style:italic;transform:scaleX(0.9371);transform-origin:0 0;">£ mn</div>
<div class="a" style="left:1074px;top:603px;width:79px;height:12px;border:2px solid #217346;border-bottom:none;box-sizing:border-box;"></div>
<div class="a" style="left:1075px;top:150px;width:77px;height:17px;display:none"></div>
<div class="a" style="left:1156px;top:167px;width:1px;height:446px;background:#e0e0e0;"></div>
<div class="a" style="left:1160px;top:152px;width:13px;height:461px;border-left:2px solid #c4c4c4;border-right:2px solid #c4c4c4;border-top:1px solid #c4c4c4;box-sizing:border-box;background:#fff;"></div>
<div class="a" style="left:1162px;top:164px;width:9px;height:2px;background:#c4c4c4;"></div>
<svg class="a" style="left:1162px;top:155px;" width="9" height="6" viewBox="0 0 9 6"><path d="M0.5 5.5L4.5 1.5L8.5 5.5z" fill="#222"/></svg>
<div class="a" style="left:1175px;top:152px;width:1px;height:461px;background:#d8d8d8;"></div>
<div class="t" style="left:1187.60px;top:162.46px;font-size:18px;line-height:22px;color:#484848;transform:scaleX(0.9883);transform-origin:0 0;">Comments</div>
<svg class="a" style="left:1540px;top:166px;" width="14" height="9" viewBox="0 0 14 9"><path d="M1 1.5l6 6 6-6" fill="none" stroke="#444" stroke-width="1.2"/></svg>
<div class="a" style="left:1510px;top:191px;width:58px;height:23px;background:#f0f0f0;border:1px solid #d6d6d6;box-sizing:border-box;"></div>
<div class="t" style="left:1535.60px;top:196.69px;font-size:11px;line-height:13px;color:#333;transform:scaleX(0.9361);transform-origin:0 0;">New</div>
<div class="a" style="left:1200px;top:226px;width:366px;height:85px;background:#f3f2f1;border:1px solid #dedcda;border-radius:4px;box-sizing:border-box;box-shadow:0 0.5px 1px rgba(0,0,0,0.06);"></div>
<svg class="a" style="left:1192px;top:233px;" width="18" height="18" viewBox="0 0 18 18"><circle cx="9" cy="9" r="8.6" fill="#d3d1cf"/><circle cx="9" cy="6.8" r="3" fill="none" stroke="#5e5e5e" stroke-width="1.1"/><path d="M3.8 14.5c0.6-2.6 2.7-4 5.2-4s4.6 1.4 5.2 4" fill="none" stroke="#5e5e5e" stroke-width="1.1"/></svg>
<div class="t" style="left:1217.60px;top:234.90px;font-size:13px;line-height:16px;color:#242424;transform:scaleX(0.9817);transform-origin:0 0;">Excel User</div>
<div class="t" style="left:1491.40px;top:238.48px;font-size:9px;line-height:11px;color:#333;transform:scaleX(0.9859);transform-origin:0 0;">I6</div>
<svg class="a" style="left:1510px;top:236px;" width="12" height="12" viewBox="0 0 12 12"><path d="M1.5 10.5l0.7-2.8 7-7 2.1 2.1-7 7z" fill="none" stroke="#444" stroke-width="1.1"/></svg>
<svg class="a" style="left:1534px;top:240px;" width="15" height="4" viewBox="0 0 15 4"><circle cx="1.6" cy="2" r="1.4" fill="#222"/><circle cx="7" cy="2" r="1.4" fill="#222"/><circle cx="12.4" cy="2" r="1.4" fill="#222"/></svg>
<div class="t" style="left:1219.60px;top:254.83px;font-size:10.6px;line-height:13px;color:#323130;">Inconsistent logic - to review</div>
<div class="a" style="left:1210px;top:278px;width:346px;height:22px;background:#fff;border:1px solid #9a9896;border-radius:2px;box-sizing:border-box;"></div>
<div class="t" style="left:1219.30px;top:282.43px;font-size:10.6px;line-height:13px;color:#605e5c;transform:scaleX(0.9446);transform-origin:0 0;">Reply</div>
<div class="a" style="left:1200px;top:321px;width:366px;height:98px;background:#f3f2f1;border:1px solid #dedcda;border-radius:4px;box-sizing:border-box;box-shadow:0 0.5px 1px rgba(0,0,0,0.06);"></div>
<svg class="a" style="left:1192px;top:328px;" width="18" height="18" viewBox="0 0 18 18"><circle cx="9" cy="9" r="8.6" fill="#d3d1cf"/><circle cx="9" cy="6.8" r="3" fill="none" stroke="#5e5e5e" stroke-width="1.1"/><path d="M3.8 14.5c0.6-2.6 2.7-4 5.2-4s4.6 1.4 5.2 4" fill="none" stroke="#5e5e5e" stroke-width="1.1"/></svg>
<div class="t" style="left:1215.70px;top:330.30px;font-size:13px;line-height:16px;color:#242424;transform:scaleX(0.9817);transform-origin:0 0;">Excel User</div>
<div class="t" style="left:1489.00px;top:333.88px;font-size:9px;line-height:11px;color:#333;transform:scaleX(0.9468);transform-origin:0 0;">J8</div>
<svg class="a" style="left:1510px;top:331px;" width="12" height="12" viewBox="0 0 12 12"><path d="M1.5 10.5l0.7-2.8 7-7 2.1 2.1-7 7z" fill="none" stroke="#444" stroke-width="1.1"/></svg>
<svg class="a" style="left:1534px;top:335px;" width="15" height="4" viewBox="0 0 15 4"><circle cx="1.6" cy="2" r="1.4" fill="#222"/><circle cx="7" cy="2" r="1.4" fill="#222"/><circle cx="12.4" cy="2" r="1.4" fill="#222"/></svg>
<div class="t" style="left:1219.60px;top:349.53px;font-size:10.6px;line-height:13px;color:#323130;">Inconsistent logic - to review</div>
<div class="t" style="left:1219.70px;top:366.55px;font-size:8.5px;line-height:10px;color:#555;transform:scaleX(0.9556);transform-origin:0 0;">17 August 2023, 12:26</div>
<div class="a" style="left:1210px;top:387px;width:346px;height:22px;background:#fff;border:1px solid #9a9896;border-radius:2px;box-sizing:border-box;"></div>
<div class="t" style="left:1219.30px;top:391.43px;font-size:10.6px;line-height:13px;color:#605e5c;transform:scaleX(0.9446);transform-origin:0 0;">Reply</div>
<div class="a" style="left:1200px;top:430px;width:366px;height:84px;background:#f3f2f1;border:1px solid #dedcda;border-radius:4px;box-sizing:border-box;box-shadow:0 0.5px 1px rgba(0,0,0,0.06);"></div>
<svg class="a" style="left:1192px;top:439px;" width="18" height="18" viewBox="0 0 18 18"><circle cx="9" cy="9" r="8.6" fill="#d3d1cf"/><circle cx="9" cy="6.8" r="3" fill="none" stroke="#5e5e5e" stroke-width="1.1"/><path d="M3.8 14.5c0.6-2.6 2.7-4 5.2-4s4.6 1.4 5.2 4" fill="none" stroke="#5e5e5e" stroke-width="1.1"/></svg>
<div class="t" style="left:1213.00px;top:440.50px;font-size:13px;line-height:16px;color:#242424;transform:scaleX(0.9817);transform-origin:0 0;">Excel User</div>
<div class="t" style="left:1488.00px;top:444.08px;font-size:9px;line-height:11px;color:#333;transform:scaleX(0.8176);transform-origin:0 0;">K8</div>
<svg class="a" style="left:1510px;top:442px;" width="12" height="12" viewBox="0 0 12 12"><path d="M1.5 10.5l0.7-2.8 7-7 2.1 2.1-7 7z" fill="none" stroke="#444" stroke-width="1.1"/></svg>
<svg class="a" style="left:1534px;top:446px;" width="15" height="4" viewBox="0 0 15 4"><circle cx="1.6" cy="2" r="1.4" fill="#222"/><circle cx="7" cy="2" r="1.4" fill="#222"/><circle cx="12.4" cy="2" r="1.4" fill="#222"/></svg>
<div class="t" style="left:1219.60px;top:458.63px;font-size:10.6px;line-height:13px;color:#323130;">Inconsistent logic - to review</div>
<div class="a" style="left:1210px;top:482px;width:346px;height:22px;background:#fff;border:1px solid #9a9896;border-radius:2px;box-sizing:border-box;"></div>
<div class="t" style="left:1219.30px;top:486.43px;font-size:10.6px;line-height:13px;color:#605e5c;transform:scaleX(0.9446);transform-origin:0 0;">Reply</div>
<div class="a" style="left:1200px;top:525px;width:366px;height:84px;background:#f3f2f1;border:1px solid #dedcda;border-radius:4px;box-sizing:border-box;box-shadow:0 0.5px 1px rgba(0,0,0,0.06);"></div>
<svg class="a" style="left:1192px;top:531px;" width="18" height="18" viewBox="0 0 18 18"><circle cx="9" cy="9" r="8.6" fill="#d3d1cf"/><circle cx="9" cy="6.8" r="3" fill="none" stroke="#5e5e5e" stroke-width="1.1"/><path d="M3.8 14.5c0.6-2.6 2.7-4 5.2-4s4.6 1.4 5.2 4" fill="none" stroke="#5e5e5e" stroke-width="1.1"/></svg>
<div class="t" style="left:1216.60px;top:533.50px;font-size:13px;line-height:16px;color:#242424;transform:scaleX(0.9817);transform-origin:0 0;">Excel User</div>
<div class="t" style="left:1487.60px;top:537.08px;font-size:9px;line-height:11px;color:#333;transform:scaleX(0.8518);transform-origin:0 0;">N9</div>
<svg class="a" style="left:1510px;top:534px;" width="12" height="12" viewBox="0 0 12 12"><path d="M1.5 10.5l0.7-2.8 7-7 2.1 2.1-7 7z" fill="none" stroke="#444" stroke-width="1.1"/></svg>
<svg class="a" style="left:1534px;top:538px;" width="15" height="4" viewBox="0 0 15 4"><circle cx="1.6" cy="2" r="1.4" fill="#222"/><circle cx="7" cy="2" r="1.4" fill="#222"/><circle cx="12.4" cy="2" r="1.4" fill="#222"/></svg>
<div class="t" style="left:1219.60px;top:553.03px;font-size:10.6px;line-height:13px;color:#323130;">Inconsistent logic - to review</div>
<div class="a" style="left:1210px;top:576px;width:346px;height:22px;background:#fff;border:1px solid #9a9896;border-radius:2px;box-sizing:border-box;"></div>
<div class="t" style="left:1219.30px;top:580.43px;font-size:10.6px;line-height:13px;color:#605e5c;transform:scaleX(0.9446);transform-origin:0 0;">Reply</div>
<svg class="a" style="left:0;top:0" width="1600" height="613"><path d="M15.8 50.5l4.6 4.6 9.6-9.6" fill="none" stroke="#4aa564" stroke-width="1.3"/><path d="M57.7 34.6h11.3l1.2 1.2 1.2-1.2h11.3v19.2H71.4l-1.2 1.2-1.2-1.2H57.7z" fill="#fafafa" stroke="#555" stroke-width="1.2"/><path d="M70.2 35.6v19" stroke="#555" stroke-width="1.6"/><path d="M61 40.3h5.8" stroke="#e3343a" stroke-width="1.1"/><path d="M61 44h5.8M61 47.4h5.8M73.6 40.3h5.8M73.6 44h5.8M73.6 47.4h5.8" stroke="#777" stroke-width="1.1"/><rect x="109.4" y="33.2" width="24.2" height="23.5" fill="#fafafa"/><rect x="109.4" y="33.2" width="24.2" height="3.2" fill="#dcdcdc"/><path d="M133.6 47.4V33.2H109.4V56.7H118.2" fill="none" stroke="#555" stroke-width="1.25"/><path d="M109.4 36.4H133.6M109.4 43.5H133.6M109.4 49.6H117.3M117.3 36.4V56.7M125.3 36.4V47" stroke="#555" stroke-width="1.05"/><text x="117.6" y="56.9" font-family="Liberation Sans" font-size="12.5" fill="#3d8fd6" stroke="#3d8fd6" stroke-width="0.35" textLength="16.4" lengthAdjust="spacingAndGlyphs">123</text><path d="M187.5 33.5h10.8l6.2 6.6v4M198.8 57.2h-11.3V33.5" fill="#fafafa" stroke="#555" stroke-width="1.2"/><path d="M198.3 33.5v6.6h6.2" fill="none" stroke="#555" stroke-width="1.2"/><path d="M202.6 49.2L199.5 47.8Q198.3 47.6 198.6 48.9L202.2 51V53.5L200.2 57.9Q200.6 59.2 201.6 58.7L204.1 55.2L206.6 58.7Q207.6 59.2 208 57.9L206 53.5V51L209.6 48.9Q209.9 47.6 208.7 47.8L205.6 49.2z" fill="#fff" stroke="#3a8fd9" stroke-width="1.15" stroke-linejoin="round"/><circle cx="204.1" cy="46.4" r="1.9" fill="#fff" stroke="#3a8fd9" stroke-width="1.15"/><circle cx="268" cy="42" r="8.3" fill="#fafafa" stroke="#3a8fd9" stroke-width="1.2"/><path d="M262 48.2l-9.7 9.6" stroke="#3a8fd9" stroke-width="1.2"/><path d="M268 40.3v7.4" stroke="#666" stroke-width="1.2"/><circle cx="268" cy="37.5" r="0.8" fill="#666"/><path d="M308.2 36l3 2.8 6.8-1.2-3.4 3.6 2.2 2.8h-8.6z" fill="#1f72c9"/><path d="M331.8 56.8l-3-2.8-6.8 1.2 3.4-3.6-2.2-2.8h8.6z" fill="#1b7f2a"/><text x="307.4" y="56.6" font-family="Liberation Sans" font-size="19" fill="#1f72c9" stroke="#1f72c9" stroke-width="0.5" textLength="10" lengthAdjust="spacingAndGlyphs">a</text><path d="M321.5 36.6c2.5 0.4 5 0.2 7.5-0.8M324.7 33.5c-0.3 4-0.3 8 0.8 12.2M327.8 38.8c-1.2 3-3.4 6-5.3 6.4-1.6 0.4-1.8-2.2 0-3.6 2.6-2 7-2.4 8.2 0.6 1 2.6-1.4 4.6-3.6 5" fill="none" stroke="#1b7f2a" stroke-width="1.3" stroke-linecap="round"/><path d="M370.1 34.2H394.3V49.9H376.6L373.5 55.4V49.9H370.1z" fill="#fafafa" stroke="none"/><path d="M376.6 34.2H394.3V49.9H376.6L373.5 55.4V49.9H370.1V40.4" fill="none" stroke="#444" stroke-width="1.25"/><path d="M375 31v13.5M368 38h13.6" stroke="#5aab6a" stroke-width="1.6"/><path d="M414.3 34.2H438.7V49.9H420.8L417.7 55.4V49.9H414.3z" fill="#f0f0f0" stroke="none"/><path d="M420.5 34.2H438.7V49.9H420.8L417.7 55.4V49.9H414.3V40.4" fill="none" stroke="#c4c4c4" stroke-width="1.25"/><path d="M413 31l11 11M424 31l-11 11" stroke="#c8c8c8" stroke-width="1.2"/><path d="M458.2 34.2H481.8V49.9H464.7L461.59999999999997 55.4V49.9H458.2z" fill="#fafafa" stroke="none"/><path d="M466.6 34.2H481.8V49.9H464.7L461.59999999999997 55.4V49.9H458.2V41" fill="none" stroke="#444" stroke-width="1.25"/><path d="M456.4 36.4h13M461 31.7l-4.6 4.7 4.6 4.7" fill="none" stroke="#3a8fd9" stroke-width="1.3"/><path d="M509.1 34.2H533.5V49.9H515.6L512.5 55.4V49.9H509.1z" fill="#fafafa" stroke="none"/><path d="M521.2 34.2H533.5V49.9H515.6L512.5 55.4V49.9H509.1V41" fill="none" stroke="#444" stroke-width="1.25"/><path d="M507.1 36.4h13.6M516 31.7l4.7 4.7-4.7 4.7" fill="none" stroke="#3a8fd9" stroke-width="1.3"/><path d="M563.4 34.3H586.6V49.9H571.5L566.2 55.2V49.9H563.4z" fill="#fbfbfb" stroke="#444" stroke-width="1.25"/><path d="M624.1 34.3H645.6V47.4L637.5 55.5H624.1z" fill="#fafafa" stroke="#444" stroke-width="1.25"/><path d="M637.5 55.5V47.4H645.6" fill="none" stroke="#444" stroke-width="1.2"/><rect x="673.2" y="34.1" width="24.09999999999991" height="21.5" fill="#fafafa"/><path d="M697.3 47.43V34.1H673.2V55.6H676.815Q679.225 55.6 680.4300000000001 51.730000000000004H686.455" fill="none" stroke="#555" stroke-width="1.2"/><path d="M673.2 40.120000000000005H697.3" stroke="#555" stroke-width="1"/><path d="M673.2 46.14H697.3" stroke="#555" stroke-width="1"/><path d="M673.2 51.730000000000004H686.455" stroke="#555" stroke-width="1"/><path d="M681.635 34.1V51.730000000000004" stroke="#555" stroke-width="1"/><path d="M689.588 34.1V46.14" stroke="#555" stroke-width="1"/><path d="M690.4 50.8V47.3a3.1 3.3 0 0 1 6.2 0V50.8" fill="none" stroke="#e8902e" stroke-width="1.4"/><rect x="688.7" y="50.8" width="9.8" height="7.6" fill="#f7d99b" stroke="#e8902e" stroke-width="1.2"/><path d="M718.3 54.2V33.2H740.6" fill="none" stroke="#555" stroke-width="1.2"/><rect x="721.4" y="35.9" width="21.399999999999977" height="20.5" fill="#fafafa"/><path d="M742.8 48.61V35.9H721.4V56.4H724.61Q726.75 56.4 727.8199999999999 52.71H733.17" fill="none" stroke="#555" stroke-width="1.2"/><path d="M721.4 41.64H742.8" stroke="#555" stroke-width="1"/><path d="M721.4 47.379999999999995H742.8" stroke="#555" stroke-width="1"/><path d="M721.4 52.709999999999994H733.17" stroke="#555" stroke-width="1"/><path d="M728.89 35.9V52.709999999999994" stroke="#555" stroke-width="1"/><path d="M735.952 35.9V47.379999999999995" stroke="#555" stroke-width="1"/><path d="M735.5 50.8V47.3a3.1 3.3 0 0 1 6.2 0V50.8" fill="none" stroke="#e8902e" stroke-width="1.4"/><rect x="733.8000000000001" y="50.8" width="9.8" height="7.6" fill="#f7d99b" stroke="#e8902e" stroke-width="1.2"/><rect x="769.5" y="35.4" width="24.5" height="19.300000000000004" fill="#fafafa"/><path d="M794 47.366V35.4H769.5V54.7H773.175Q775.625 54.7 776.85 51.226H782.975" fill="none" stroke="#555" stroke-width="1.2"/><path d="M769.5 40.804H794.0" stroke="#555" stroke-width="1"/><path d="M769.5 46.208H794.0" stroke="#555" stroke-width="1"/><path d="M769.5 51.226H782.975" stroke="#555" stroke-width="1"/><path d="M778.075 35.4V51.226" stroke="#555" stroke-width="1"/><path d="M786.16 35.4V46.208" stroke="#555" stroke-width="1"/><path d="M777.5 58.2l1.6-4.7 13.2-13.2 3.1 3.1-13.2 13.2z" fill="#fff" stroke="#3a8fd9" stroke-width="1.5" stroke-linejoin="round"/><path d="M790.6 42l3.1 3.1" stroke="#3a8fd9" stroke-width="1.2"/><path d="M821 54.2V33.3H842.8" fill="none" stroke="#c4c4c4" stroke-width="1.2"/><rect x="823.4" y="35.8" width="21.300000000000068" height="20.300000000000004" fill="#f7f7f7"/><path d="M844.7 48.385999999999996V35.8H823.4V56.1H826.595Q828.725 56.1 829.79 52.446H835.115" fill="none" stroke="#c4c4c4" stroke-width="1.2"/><path d="M823.4 41.484H844.7" stroke="#c4c4c4" stroke-width="1"/><path d="M823.4 47.168H844.7" stroke="#c4c4c4" stroke-width="1"/><path d="M823.4 52.446H835.115" stroke="#c4c4c4" stroke-width="1"/><path d="M830.855 35.8V52.446" stroke="#c4c4c4" stroke-width="1"/><path d="M837.884 35.8V47.168" stroke="#c4c4c4" stroke-width="1"/><circle cx="840.6" cy="49.3" r="3.6" fill="#f0f0f0" stroke="#c4c4c4" stroke-width="1.2"/><path d="M835 58.8c0-3.3 2.5-5.3 5.6-5.3s5.6 2 5.6 5.3z" fill="#f0f0f0" stroke="#c4c4c4" stroke-width="1.2"/><path d="M879.6 33.5H899.2L879.6 53.2z" fill="#f6f6f6" stroke="#444" stroke-width="1.5" stroke-linejoin="miter"/><path d="M891.8 41.5c1.4 0.6 1.6 2.2 1.2 3.4-0.4 1.4 1 1.6 2.6 0.8l7.4-3.2M879.6 57.2c3-2 6.6-4.4 10-5 2.4-0.4 3.2 0.8 3.2 2.4 0 1.6 1.4 1.6 3 0.8l6.6-2.6" fill="none" stroke="#e3343a" stroke-width="1.4" stroke-linecap="round"/><text x="189.6" y="133.6" font-family="Liberation Serif" font-style="italic" font-weight="bold" font-size="13.5" fill="#505050">f</text><text x="194.6" y="133.6" font-family="Liberation Serif" font-style="italic" font-weight="bold" font-size="9.5" fill="#505050">x</text><path d="M449.2 257H456.8V263.2L452.7 259.6H449.2z" fill="#c04ccf"/><path d="M526.2 292H533.8V298.2L529.7 294.6H526.2z" fill="#c04ccf"/><path d="M603.2 292H610.8V298.2L606.7 294.6H603.2z" fill="#c04ccf"/><path d="M765.8 308.9H771.5L765.8 314.6z" fill="#0f7f12"/><path d="M835.2 309H842.8V315.2L838.7 311.6H835.2z" fill="#c04ccf"/><path d="M688.8 325.9H694.5L688.8 331.6z" fill="#0f7f12"/><path d="M758.2 326H765.8V332.2L761.7 328.6H758.2z" fill="#c04ccf"/><path d="M997.8 360.9H1003.5L997.8 366.6z" fill="#0f7f12"/><path d="M1067.2 361H1074.8V367.2L1070.7 363.6H1067.2z" fill="#c04ccf"/><path d="M610.8 430.9H616.5L610.8 436.6z" fill="#0f7f12"/><path d="M681.2 431H688.8V437.2L684.7 433.6H681.2z" fill="#c04ccf"/><path d="M842.8 430.9H848.5L842.8 436.6z" fill="#0f7f12"/><path d="M913.2 431H920.8V437.2L916.7 433.6H913.2z" fill="#c04ccf"/><path d="M610.8 482.9H616.5L610.8 488.6z" fill="#0f7f12"/><path d="M681.2 483H688.8V489.2L684.7 485.6H681.2z" fill="#c04ccf"/><path d="M1579.3 165.8l9 9M1588.3 165.8l-9 9" stroke="#444" stroke-width="1.2"/><path d="M1523.5 196.5h8.3v7.8h-5.8l-3 3v-3h-1v-4.3" fill="none" stroke="#444" stroke-width="1.1"/><path d="M1522.3 194v6.2M1519.2 197.1h6.2" stroke="#444" stroke-width="1.1"/><ellipse cx="575.2" cy="64.8" rx="39.4" ry="41.3" fill="none" stroke="#e5141e" stroke-width="4.6"/></svg>
</body></html>
